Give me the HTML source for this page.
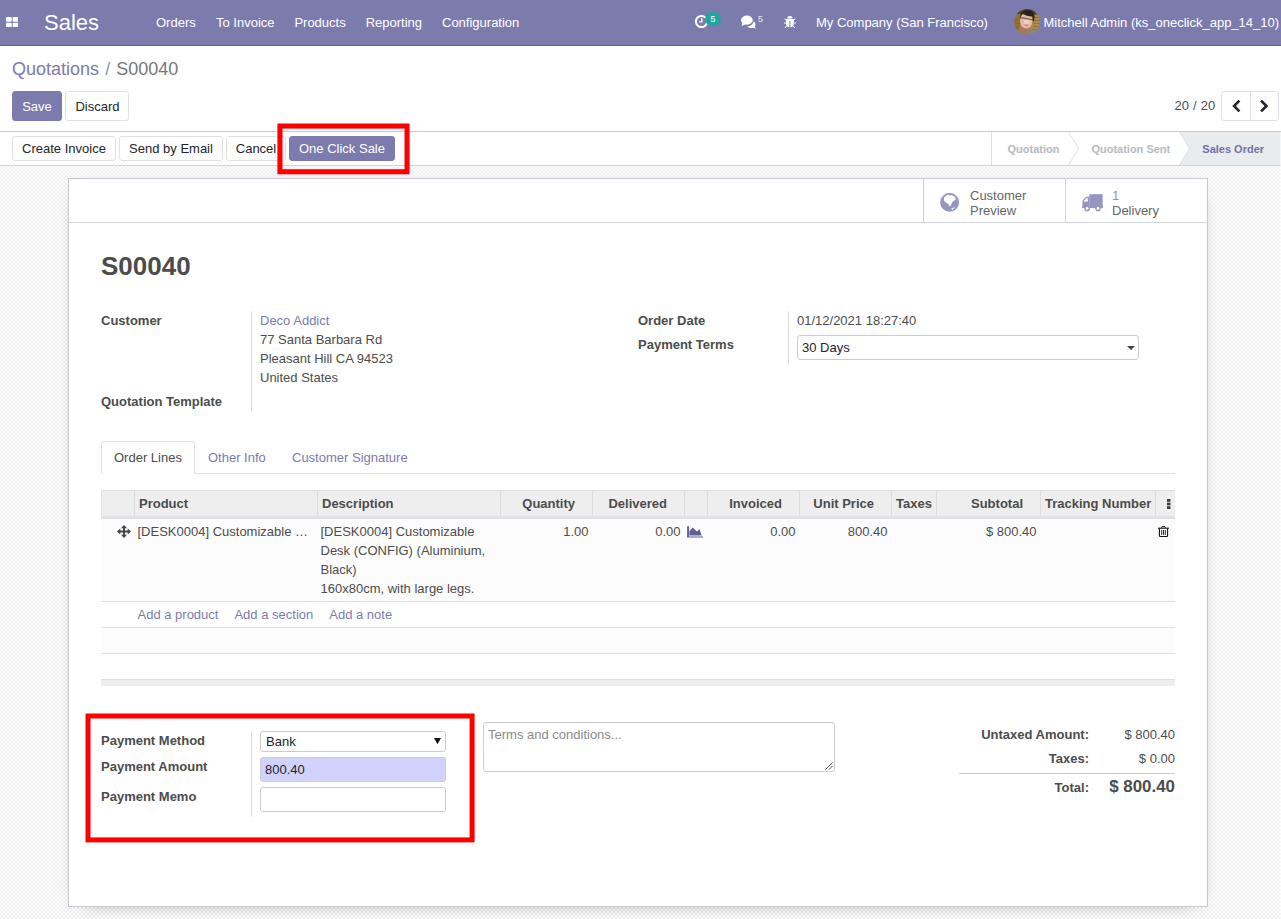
<!DOCTYPE html>
<html lang="en">
<head>
<meta charset="utf-8">
<title>S00040 - Odoo</title>
<style>
*{box-sizing:border-box;}
html,body{margin:0;padding:0;}
body{width:1281px;height:919px;overflow:hidden;position:relative;background:#fff;
  font-family:"Liberation Sans",Arial,sans-serif;font-size:13px;color:#666;line-height:1.5;}
a{color:#7c7bad;text-decoration:none;}
.abs{position:absolute;white-space:nowrap;}

/* ---------- navbar ---------- */
#nav{position:absolute;left:0;top:0;width:1281px;height:46px;background:#7c7bad;border-bottom:1px solid #5f5e97;color:#fff;}
#nav .abs{line-height:19px;top:13px;color:#fff;}
#nav .brand{font-size:22px;line-height:25px;left:44px;top:10px;}
.badge{position:absolute;background:#21a59c;color:#fff;font-size:9px;line-height:14px;height:14px;width:16px;text-align:center;border-radius:7px;}

/* ---------- control panel ---------- */
#cp{position:absolute;left:0;top:46px;width:1281px;height:86px;background:#fff;border-bottom:1px solid #ccc;}
.crumb{font-size:18px;line-height:24px;left:12px;top:11px;color:#777;}
.btn{position:absolute;white-space:nowrap;font-size:13px;line-height:19px;text-align:center;border:1px solid #dee2e6;border-radius:3px;background:#fff;color:#212529;}
.btn.pri{background:#7c7bad;border-color:#7c7bad;color:#fff;}

/* ---------- status bar ---------- */
#sb{position:absolute;left:0;top:132px;width:1281px;height:34px;background:#fff;border-bottom:1px solid #ced4da;}
.st{position:absolute;top:1px;height:33px;line-height:33px;font-size:11px;font-weight:bold;color:#b4bac0;white-space:nowrap;}

/* ---------- sheet background ---------- */
#bg{position:absolute;left:0;top:166px;width:1281px;height:753px;background-color:#fff;
  background-image:conic-gradient(#eeeeee 25%,#fff 0 50%,#eeeeee 0 75%,#fff 0);background-size:4px 4px;background-position:1px 3px;}
#sheet{position:absolute;left:68px;top:178px;width:1140px;height:729px;background:#fff;border:1px solid #c8c8d3;box-shadow:0 5px 20px -15px rgba(0,0,0,.7);}
#bbox{position:absolute;left:0;top:0;width:1138px;height:44px;border-bottom:1px solid #ced4da;}
.stat{position:absolute;top:0;height:43px;border-left:1px solid #ced4da;}
.stat .abs{font-size:13px;line-height:15px;color:#666;}

h1{position:absolute;margin:0;left:101px;top:248px;font-size:26px;line-height:36px;font-weight:bold;color:#4c4c4c;}
.lbl{position:absolute;white-space:nowrap;font-weight:bold;color:#4c4c4c;font-size:13px;line-height:19px;}
.val{position:absolute;white-space:nowrap;font-size:13px;line-height:19px;color:#4c4c4c;}
.vsep{position:absolute;width:1px;background:#ddd;}
.inp{position:absolute;border:1px solid #ccc;border-radius:3px;background:#fff;font-size:13px;color:#212529;line-height:19px;padding:0 5px;white-space:nowrap;}

/* ---------- notebook ---------- */
#tabs{position:absolute;left:101px;top:441px;width:1074px;height:33px;border-bottom:1px solid #dee2e6;}
.tab{position:absolute;top:0;height:33px;line-height:31px;font-size:13px;color:#7c7bad;white-space:nowrap;}
.tab.on{border:1px solid #dee2e6;border-bottom-color:#fff;border-radius:3px 3px 0 0;background:#fff;color:#4c4c4c;}

/* ---------- list ---------- */
#list{position:absolute;left:101px;top:490px;width:1074px;border-collapse:separate;border-spacing:0;table-layout:fixed;font-size:13px;line-height:19px;color:#4c4c4c;}
#list th{height:29px;padding:3px 4px;background:#eee;border-top:1px solid #dee2e6;border-bottom:3px solid #dee2e6;border-left:1px solid #ddd;font-weight:bold;text-align:left;white-space:nowrap;overflow:hidden;vertical-align:top;color:#4c4c4c;}
#list th:first-child{border-left:1px solid #e2e5e8;}
#list td{padding:3px 3.500px;vertical-align:top;white-space:nowrap;overflow:hidden;border-bottom:1px solid #dee2e6;}
#list td.wrap{white-space:normal;}
#list .r{text-align:right;padding-right:3.500px;}
#list th.n{text-align:right;padding-right:17px;}
#list th.menu{padding:8px 0 0 0;}
#list td.hd,#list td.ic,#list td.tr{padding:3px 0 0 0;}
.ell{overflow:hidden;text-overflow:ellipsis;white-space:nowrap;}
#list tr.data td{background:#fcfcfc;}
#list tr.e1 td{background:#fcfcfc;}
#list tfoot td{background:#eee;height:6px;padding:0;border:0;line-height:0;}

</style>
</head>
<body>

<!-- NAVBAR -->
<div id="nav">
  <svg class="abs" style="left:5.800px;top:16.700px" width="12.400" height="10.400" viewBox="0 0 12.400 10.400"><rect x="0" y="0" width="5.700" height="4.700" rx=".7" fill="#fff"/><rect x="6.700" y="0" width="5.700" height="4.700" rx=".7" fill="#fff"/><rect x="0" y="5.700" width="5.700" height="4.700" rx=".7" fill="#fff"/><rect x="6.700" y="5.700" width="5.700" height="4.700" rx=".7" fill="#fff"/></svg>
  <span class="abs brand">Sales</span>
  <span class="abs" style="left:156px">Orders</span>
  <span class="abs" style="left:216px">To Invoice</span>
  <span class="abs" style="left:294.400px">Products</span>
  <span class="abs" style="left:365.700px">Reporting</span>
  <span class="abs" style="left:442px">Configuration</span>
  <!-- activity clock -->
  <svg class="abs" style="left:694px;top:14px" width="15" height="15" viewBox="0 0 15 15"><circle cx="7.5" cy="7.5" r="5.6" fill="none" stroke="#fff" stroke-width="2"/><path d="M7.9 4.2v3.7H5.2" fill="none" stroke="#fff" stroke-width="1.4"/></svg>
  <span class="badge" style="left:705px;top:12px;">5</span>
  <!-- comments -->
  <svg class="abs" style="left:740px;top:15px" width="17" height="14" viewBox="0 0 17 14"><ellipse cx="6.900" cy="5.100" rx="5.900" ry="4.550" fill="#fff"/><path d="M2.200 7.500L1.700 10.900 5.600 9.200z" fill="#fff"/><path d="M13.400 6.600C14.700 7.300 15.500 8.400 15.500 9.600 15.500 10.400 15.200 11.100 14.700 11.700L16.100 13.700 13.300 12.700C12.700 12.900 12 13 11.300 13 9.600 13 8.100 12.400 7.200 11.500 10.600 11.300 13.100 9.300 13.400 6.600z" fill="#fff"/></svg>
  <span class="abs" style="left:758px;top:10px;font-size:9px;opacity:.85;">5</span>
  <!-- bug -->
  <svg class="abs" style="left:784px;top:15.500px" width="12" height="12.500" viewBox="0 0 12 12.500"><path d="M3.300 2.500A2.600 2.400 0 0 1 8.500 2.500z" fill="#fff"/><path d="M2 3.100H9.800V8A3.900 3.400 0 0 1 6.400 11.300V5H5.400V11.300A3.900 3.400 0 0 1 2 8z" fill="#fff"/><path d="M.5 2.600L2.300 4.600M11.300 2.600L9.500 4.600M0 7H2M11.800 7H9.800M1 12L2.700 10M10.800 12L9.100 10" stroke="#fff" stroke-width="1" fill="none"/></svg>
  <!-- avatar -->
  <svg class="abs" style="left:1014px;top:9px" width="26" height="26" viewBox="0 0 26 26"><defs><clipPath id="av"><circle cx="13" cy="13" r="12.900"/></clipPath><filter id="bl" x="-20%" y="-20%" width="140%" height="140%"><feGaussianBlur stdDeviation=".55"/></filter></defs><g clip-path="url(#av)"><g filter="url(#bl)"><rect x="-3" y="-3" width="32" height="32" fill="#ab8a4a"/><rect x="-3" y="-3" width="32" height="8.500" fill="#54401f"/><rect x="-3" y="5" width="9" height="24" fill="#8f6f38"/><path d="M18 8.500h9M18 11.500h9M19 14.500h8M19 17.500h8M18 20.500h9M0 11h6M0 14.500h6M0 18h6" stroke="#856634" stroke-width=".7"/><path d="M-1 27L3 21 8 19 10 16.500H16L17 21 15.500 27z" fill="#a9785a"/><path d="M14.800 22.500L17.200 20.300 22.500 22.500 21 27H14z" fill="#7d8b8c"/><ellipse cx="12.300" cy="11.800" rx="6.200" ry="7.700" fill="#e4bba8"/><ellipse cx="12.800" cy="13" rx="3" ry="2.500" fill="#edd0c4"/><path d="M6.200 9.500C5.800 4.500 9 1 13.500 1 18.600 1 21.200 4.500 20.400 9L19.800 12.600 18.700 12 18.600 7.400C16 7.800 11 6.400 8.600 4.700 7.400 6 6.800 7.500 6.200 9.500z" fill="#2a211b"/><path d="M6 8.500L8.600 8.300 18.600 10.300V11.200L8.800 9.500 6 9.400z" fill="#3b302b" opacity=".75"/><ellipse cx="12.400" cy="16.300" rx="2.300" ry="1" fill="#c98a8c"/></g></g></svg>
  <span class="abs" style="left:816px">My Company (San Francisco)</span>
  <span class="abs" style="left:1043.500px">Mitchell Admin (ks_oneclick_app_14_10)</span>
</div>

<!-- CONTROL PANEL -->
<div id="cp">
  <div class="abs crumb"><a>Quotations</a></div><div class="abs crumb" style="left:105.300px;color:#8f959b;">/</div><div class="abs crumb" style="left:116.300px;">S00040</div>
  <div class="btn pri" style="left:12px;top:45px;width:50px;height:30px;line-height:29px;">Save</div>
  <div class="btn" style="left:65px;top:45px;width:64px;height:30px;line-height:29px;padding-left:1px;">Discard</div>
  <div class="abs" style="left:1174.600px;top:50px;color:#4c4c4c;line-height:19px;word-spacing:.4px;">20 / 20</div>
  <div class="btn" style="left:1221px;top:45px;width:30px;height:30px;border-radius:3px 0 0 3px;"></div>
  <div class="btn" style="left:1250px;top:45px;width:29px;height:30px;border-radius:0 3px 3px 0;"></div>
  <svg class="abs" style="left:1231px;top:54px" width="10" height="12" viewBox="0 0 10 12"><path d="M8.400 .6L3.100 6l5.300 5.400" fill="none" stroke="#212529" stroke-width="2.600"/></svg>
  <svg class="abs" style="left:1259px;top:54px" width="10" height="12" viewBox="0 0 10 12"><path d="M2.100 .6L7.400 6l-5.300 5.400" fill="none" stroke="#212529" stroke-width="2.600"/></svg>
</div>

<!-- STATUS BAR -->
<div id="sb">
  <div class="btn" style="left:12px;top:4px;width:104px;height:25px;line-height:23px;">Create Invoice</div>
  <div class="btn" style="left:119px;top:4px;width:104px;height:25px;line-height:23px;">Send by Email</div>
  <div class="btn" style="left:226px;top:4px;width:60px;height:25px;line-height:23px;">Cancel</div>
  <div class="btn pri" style="left:289px;top:4px;width:106px;height:25px;line-height:23px;">One Click Sale</div>
  <svg class="abs" style="left:991px;top:0" width="290" height="33" viewBox="0 0 290 33">
    <rect x="0" y="0" width="1" height="33" fill="#dee2e6"/>
    <path d="M188.500 0H290V33H188.500L198.500 16.500z" fill="#e9ecef"/>
    <path d="M77.500 0L87.500 16.500L77.500 33" fill="none" stroke="#dee2e6" stroke-width="1"/>
    <path d="M188.500 0L198.500 16.500L188.500 33" fill="none" stroke="#dee2e6" stroke-width="1"/>
  </svg>
  <span class="st" style="left:1007.500px;">Quotation</span>
  <span class="st" style="left:1091.400px;">Quotation Sent</span>
  <span class="st" style="left:1202.300px;color:#7372a8;">Sales Order</span>
</div>

<!-- SHEET -->
<div id="bg"></div>
<div id="sheet">
  <div id="bbox"></div>
</div>


<!-- stat buttons -->
<div class="stat" style="left:923px;top:179px;width:142px;"></div>
<div class="stat" style="left:1065px;top:179px;width:142px;"></div>
<svg class="abs" style="left:940px;top:193px" width="20" height="20" viewBox="0 0 20 20"><circle cx="9.600" cy="9.400" r="9.450" fill="#9695c0"/><path d="M3.700 4.900L6.400 2.200 9.400 1.800 9.900 2.900 11.200 2.100 15 3.700 15.800 6.400 12.600 8.800 11.600 10.400 11.100 12.300 9.100 13.500 8.300 11 7 10.300 4.400 8.400z" fill="#fff"/><path d="M11.100 15.400L15 13.900 12.600 17z" fill="#fff"/></svg>
<div class="abs" style="left:970px;top:188px;line-height:15px;color:#666;">Customer<br>Preview</div>
<svg class="abs" style="left:1082px;top:194px" width="22" height="18" viewBox="0 0 22 18"><path d="M7.300 .2H20.700V13.600H7.300z" fill="#9695c0"/><path d="M.4 7.200C.4 6.700 .6 6.300 .9 6L3.400 3.400C3.800 3 4.300 2.700 4.900 2.700H7.400V13.600H.4z" fill="#9695c0"/><path d="M1.700 7.400V7L4.300 4.300H5.900V7.400z" fill="#fff"/><rect x="0" y="12.600" width="21" height="1.500" fill="#9695c0"/><circle cx="5.100" cy="14.400" r="2.800" fill="#9695c0"/><circle cx="5.100" cy="14.400" r="1.400" fill="#fff"/><circle cx="16" cy="14.400" r="2.800" fill="#9695c0"/><circle cx="16" cy="14.400" r="1.400" fill="#fff"/></svg>
<div class="abs" style="left:1112px;top:188px;line-height:15px;color:#666;"><span style="color:#9190c0">1</span><br>Delivery</div>

<h1>S00040</h1>

<!-- left group -->
<div class="lbl" style="left:101px;top:311px;">Customer</div>
<div class="vsep" style="left:251px;top:311px;height:100px;"></div>
<div class="val" style="left:260px;top:311px;"><a>Deco Addict</a><br>77 Santa Barbara Rd<br>Pleasant Hill CA 94523<br>United States</div>
<div class="lbl" style="left:101px;top:392px;">Quotation Template</div>

<!-- right group -->
<div class="lbl" style="left:638px;top:311px;">Order Date</div>
<div class="vsep" style="left:788px;top:311px;height:54px;"></div>
<div class="val" style="left:797px;top:311px;">01/12/2021 18:27:40</div>
<div class="lbl" style="left:638px;top:335px;">Payment Terms</div>
<div class="inp" style="left:797px;top:335px;width:342px;height:25px;line-height:23px;padding-left:4px;">30 Days</div>
<svg class="abs" style="left:1127px;top:346px" width="8" height="4" viewBox="0 0 8 4"><path d="M0 0h8L4 4z" fill="#444"/></svg>

<!-- notebook tabs -->
<div id="tabs">
  <div class="tab on" style="left:0;width:94px;padding-left:12px;">Order Lines</div>
  <div class="tab" style="left:107px;top:1px;">Other Info</div>
  <div class="tab" style="left:191px;top:1px;">Customer Signature</div>
</div>


<!-- order lines list -->
<table id="list">
  <colgroup><col style="width:33px"><col style="width:183px"><col style="width:183px"><col style="width:92px"><col style="width:92px"><col style="width:23px"><col style="width:92px"><col style="width:92px"><col style="width:45px"><col style="width:104px"><col style="width:115px"><col style="width:20px"></colgroup>
  <thead>
    <tr><th></th><th>Product</th><th>Description</th><th class="n">Quantity</th><th class="n">Delivered</th><th></th><th class="n">Invoiced</th><th class="n">Unit Price</th><th>Taxes</th><th class="n">Subtotal</th><th>Tracking Number</th><th class="menu"><svg width="4" height="10" viewBox="0 0 4 10" style="display:block;margin:0 0 0 10.800px"><rect x="0" y="0" width="3.500" height="2.700" fill="#3c3c3c"/><rect x="0" y="3.650" width="3.500" height="2.700" fill="#3c3c3c"/><rect x="0" y="7.300" width="3.500" height="2.700" fill="#3c3c3c"/></svg></th></tr>
  </thead>
  <tbody>
    <tr class="data">
      <td class="hd"><svg width="14" height="13" viewBox="0 0 14 13" style="display:block;margin:3px 0 0 16px"><path d="M1.500 6.500H12.500M7 1.500V11.500" stroke="#454545" stroke-width="1.900" fill="none"/><path d="M0 6.500L3.300 3.500V9.500zM14 6.500L10.700 3.500V9.500zM7 0L4 3.300H10zM7 13L4 9.700H10z" fill="#454545"/></svg></td>
      <td><div class="ell">[DESK0004] Customizable Desk (CONFIG) (Aluminium, Black)</div></td>
      <td class="wrap">[DESK0004] Customizable Desk (CONFIG) (Aluminium, Black)<br>160x80cm, with large legs.</td>
      <td class="r">1.00</td><td class="r">0.00</td>
      <td class="ic"><svg width="16" height="12" viewBox="0 0 16 12" style="display:block;margin:3.500px 0 0 3px"><path d="M.1 .3H2V10.500H15.900V11.400H.1z" fill="#5f5e97"/><path d="M2.400 9.400V5.300L5.600 1.400 9.900 5.600 12.600 3.300 14.600 9.400z" fill="#5f5e97"/></svg></td>
      <td class="r">0.00</td><td class="r">800.40</td><td></td><td class="r">$&nbsp;800.40</td><td></td>
      <td class="tr"><svg width="11" height="11" viewBox="0 0 11 11" style="display:block;margin:4px 0 0 3.100px"><path d="M3.600 1.700L4.200 .5H6.800L7.400 1.700" stroke="#111" stroke-width="1" fill="none"/><path d="M0 2.200H11" stroke="#111" stroke-width="1.100"/><path d="M1.400 2.400V9.500a1 1 0 0 0 1 1H8.600a1 1 0 0 0 1-1V2.400" stroke="#111" stroke-width="1.100" fill="none"/><path d="M3.700 4V8.900M5.500 4V8.900M7.300 4V8.900" stroke="#111" stroke-width=".9"/></svg></td>
    </tr>
    <tr class="add"><td></td><td colspan="11"><a>Add a product</a><a style="margin-left:16px">Add a section</a><a style="margin-left:16px">Add a note</a></td></tr>
    <tr class="e1"><td colspan="12">&nbsp;</td></tr>
    <tr class="e2"><td colspan="12">&nbsp;</td></tr>
  </tbody>
  <tfoot><tr><td colspan="12"></td></tr></tfoot>
</table>

<!-- payment group -->
<div class="lbl" style="left:101px;top:731px;">Payment Method</div>
<div class="lbl" style="left:101px;top:757px;">Payment Amount</div>
<div class="lbl" style="left:101px;top:787px;">Payment Memo</div>
<div class="vsep" style="left:251px;top:731px;height:86px;"></div>
<div class="inp" style="left:260px;top:731px;width:186px;height:21px;line-height:19px;padding-left:5px;">Bank</div>
<svg class="abs" style="left:433.500px;top:737.600px" width="7" height="6.200" viewBox="0 0 7 6.200"><path d="M0 0h7L3.500 6.200z" fill="#111"/></svg>
<div class="inp" style="left:260px;top:757px;width:186px;height:25px;line-height:24px;padding-left:4px;background:#d2d2ff;">800.40</div>
<div class="inp" style="left:260px;top:787px;width:186px;height:25px;"></div>

<!-- terms -->
<div class="inp" style="left:483px;top:722px;width:352px;height:50px;line-height:19px;padding:2px 4px;color:#8a8a8a;">Terms and conditions...</div>
<svg class="abs" style="left:825px;top:762px" width="8" height="8" viewBox="0 0 8 8"><path d="M7.500 .5L.5 7.500M7.500 4L4 7.500" stroke="#555" stroke-width="1" fill="none"/></svg>

<!-- totals -->
<div class="lbl" style="left:959px;top:725px;width:130px;text-align:right;">Untaxed Amount:</div>
<div class="val" style="left:1095px;top:725px;width:80px;text-align:right;">$&nbsp;800.40</div>
<div class="lbl" style="left:959px;top:749px;width:130px;text-align:right;">Taxes:</div>
<div class="val" style="left:1095px;top:749px;width:80px;text-align:right;">$&nbsp;0.00</div>
<div class="abs" style="left:959px;top:773px;width:216px;height:1px;background:#ccc;"></div>
<div class="lbl" style="left:959px;top:778px;width:130px;text-align:right;">Total:</div>
<div class="val" style="left:1095px;top:775px;width:80px;text-align:right;font-size:16.900px;font-weight:bold;line-height:24px;">$&nbsp;800.40</div>

<div class="abs" style="left:1280px;top:132px;width:1px;height:787px;background:rgba(255,255,255,.55);"></div>

<!-- annotation rectangles -->
<svg class="abs" style="left:0;top:0;pointer-events:none" width="1281" height="919" viewBox="0 0 1281 919">
  <rect x="279.950" y="126.050" width="127.100" height="45.700" fill="none" stroke="#ff0000" stroke-width="5.100"/>
  <rect x="88" y="716" width="384.100" height="123.900" fill="none" stroke="#ff0000" stroke-width="5"/>
</svg>

</body>
</html>
